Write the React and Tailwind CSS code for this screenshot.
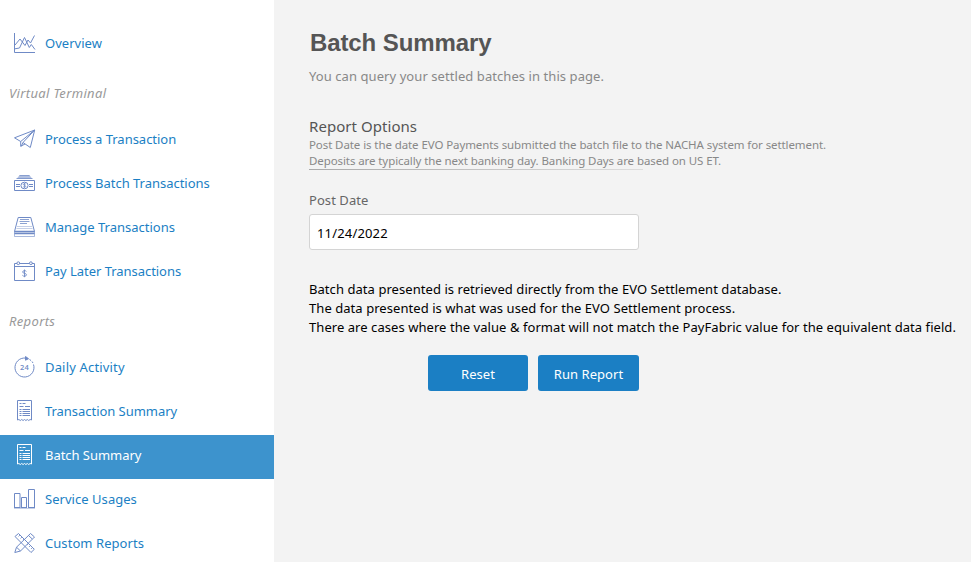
const icons = {
  overview: (
    <>
      <path d="M.5 1v19.5H21" />
      <path d="M1 16.8l4.5-.8L10.5 5.5l4.8 10 2-3L21 17.5" />
      <path d="M1 13l5-6 5 6.5L14 8l2.5 3L20.5 3.5" />
    </>
  ),
  plane: (
    <>
      <path d="M20.7 2L.5 9.8l6.2 3.7z" />
      <path d="M20.7 2l-4.4 17.5-7.3-5z" />
      <path d="M6.7 13.5v4.8L11 16M9 14.5l-1.8 3.8" />
    </>
  ),
  cash: (
    <>
      <path d="M5.5 3.2h10L18.5 7h-16z" fill="currentColor" fillOpacity=".55" stroke="none" />
      <path d="M5.5 3.5h10M2.5 6.5h16" strokeOpacity=".7" />
      <path d="M.5 8.5h20v10H.5z" />
      <ellipse cx="10.5" cy="13.5" rx="3.6" ry="3.3" />
      <path d="M2 12.5h4M2 14.5h4M15 12.5h4M15 14.5h4" />
      <path d="M11.8 12.2c-.8-.8-2.5-.6-2.5.3s2.5.8 2.5 1.8-1.9 1.2-2.6.3M10.5 11v5" strokeWidth=".8" />
    </>
  ),
  stack: (
    <>
      <path d="M4.2 1.5h12.6l3.7 14H.5z" />
      <path d="M6 3.5h9M5.5 5.5h10M6 7.5h7" strokeWidth=".8" />
      <path d="M3 10.5h15M2.5 12.5h16" strokeOpacity=".4" />
      <path d="M.5 15.5v2h20v-2M.5 17.5v3h20v-3" strokeOpacity=".6" />
      <path d="M.5 15.5h20M.5 17.5h20" strokeWidth="1.3" />
    </>
  ),
  calendar: (
    <>
      <path d="M.5 3.5H3M5.5 3.5h10M18 3.5h2.5v17H.5v-17M.5 6.5h20" />
      <circle cx="4.3" cy="3.2" r="1.4" />
      <circle cx="16.9" cy="3.2" r="1.4" />
      <path d="M12.4 11.4c-.8-1.2-3.8-1-3.8.6 0 1.7 3.9 1 3.9 2.8 0 1.7-3.2 1.9-4.1.5M10.5 9.5v7.7" strokeWidth=".9" />
    </>
  ),
  day: (
    <>
      <path d="M13.5 2.5A9.5 9.5 0 1 0 19.5 8.5" />
      <path d="M15.5 3.5l1.5 1M18 5.5l1 1.5" />
      <path d="M11.5.5l3 2.2-3 1.5z" fill="currentColor" />
      <text x="10.4" y="14" textAnchor="middle" fontSize="7.5" stroke="none" fill="currentColor" className="font-['Open_Sans',sans-serif] font-semibold">24</text>
    </>
  ),
  receipt: (
    <>
      <path d="M3.5 20V.5h14V20l-1.4-.5-1.4 1-1.4-1-1.4 1-1.4-1-1.4 1-1.4-1-1.4 1-1.4-1z" />
      <path d="M5.5 3.5h2M8.5 3.5h3M5.5 6.5h4M11 6.5h5" />
      <path d="M5.5 9.5h2M8.5 9.5h7.5M5.5 11.5h2M8.5 11.5h7.5M5.5 13.5h2M8.5 13.5h7.5M5.5 15.5h2M8.5 15.5h7.5" strokeWidth="1.2" />
    </>
  ),
  bars: (
    <>
      <path d="M.5 19.5V5.5H6v14M7.5 19.5v-10h5v10M14.5 19.5v-18h6v18" />
      <path d="M0 19.5h6.5M7 19.5h6M14 19.5h7" />
      <path d="M0 20.5h21" strokeOpacity=".4" />
    </>
  ),
  tools: (
    <>
      <path d="M1 4.5L4.5 1.5 20.3 17.3 17 20.5z" />
      <path d="M6 3L4.5 4.5M8 5L6.5 6.5M10 7L9 8M14.5 11.5L13 13M16.5 13.5L15 15M18.5 15.5L17 17" strokeWidth=".8" />
      <path d="M16.5 1.5l4 3.5L6.5 19 .8 20.5l1.7-5.3zM14.5 3.5l3.8 3.5M2.5 15.2l4 3.8" />
    </>
  ),
};

function Icon({ name }) {
  return (
    <svg viewBox="0 0 22 22" fill="none" stroke="currentColor" strokeWidth="1" className="size-[22px] shrink-0">
      {icons[name]}
    </svg>
  );
}

const topItems = [{ label: "Overview", icon: "overview", tracking: "tracking-[0.02px]" }];
const terminalItems = [
  { label: "Process a Transaction", icon: "plane", tracking: "tracking-[-0.02px]" },
  { label: "Process Batch Transactions", icon: "cash", tracking: "tracking-[-0.02px]" },
  { label: "Manage Transactions", icon: "stack", tracking: "tracking-[-0.01px]" },
  { label: "Pay Later Transactions", icon: "calendar", tracking: "tracking-[-0.04px]" },
];
const reportItems = [
  { label: "Daily Activity", icon: "day", tracking: "tracking-[0.17px]" },
  { label: "Transaction Summary", icon: "receipt", tracking: "tracking-[-0.04px]" },
  { label: "Batch Summary", icon: "receipt", tracking: "tracking-[-0.04px]", active: true },
  { label: "Service Usages", icon: "bars", tracking: "tracking-[0.04px]" },
  { label: "Custom Reports", icon: "tools", tracking: "tracking-[0.06px]" },
];

function NavList({ items }) {
  return (
    <ul>
      {items.map(({ label, icon, tracking, active }) => (
        <li
          key={label}
          className={`flex h-11 items-center gap-[9px] pb-1 pl-3.5 ${active ? "bg-[#3d93cd] text-white" : "text-[#1b7fc4]"}`}
        >
          <span className={active ? "text-white" : "text-[#6f8ac6]"}>
            <Icon name={icon} />
          </span>
          <a className={`whitespace-nowrap text-[13px] leading-5 ${tracking}`}>{label}</a>
        </li>
      ))}
    </ul>
  );
}

function NavHeading({ children }) {
  return (
    <h2 className="flex h-[52px] items-center pl-[9px] text-[13px] leading-5 tracking-[0.34px] text-[#999] italic">{children}</h2>
  );
}

export default function App() {
  return (
    <div className="flex h-[562px] w-[971px] overflow-hidden bg-[#f3f3f3] font-['Noto_Sans',sans-serif]">
      <nav className="w-[274px] shrink-0 bg-white pt-[23px]">
        <NavList items={topItems} />
        <NavHeading>Virtual Terminal</NavHeading>
        <NavList items={terminalItems} />
        <NavHeading>Reports</NavHeading>
        <NavList items={reportItems} />
      </nav>
      <main className="flex flex-col whitespace-nowrap pl-[35px] pt-7">
        <h1 className="pl-px font-['Liberation_Sans',Arial,sans-serif] text-2xl leading-[30px] font-bold tracking-[-0.1px] text-[#555]">
          Batch Summary
        </h1>
        <p className="mt-2 text-[13px] leading-5 tracking-[0.07px] text-[#888]">
          You can query your settled batches in this page.
        </p>
        <h2 className="mt-[30px] mb-px text-[15px] leading-5 tracking-[0.05px] text-[#555]">Report Options</h2>
        <p className="text-[11.5px] leading-4 tracking-[-0.09px] text-[#888]">
          Post Date is the date EVO Payments submitted the batch file to the NACHA system for settlement.
          <br />
          Deposits are typically the next banking day. Banking Days are based on US ET.
        </p>
        <div className="h-px w-[334px] bg-gradient-to-r from-[#aaa] to-[#ddd]" />
        <label className="mt-5 text-[13px] leading-5 tracking-[0.06px] text-[#666]">Post Date</label>
        <div className="mt-1 flex h-9 w-[330px] items-center rounded-[3px] border border-[#d4d4d4] bg-white px-[7px] pt-0.5 text-[13px] leading-5 tracking-[0.16px] text-black">
          11/24/2022
        </div>
        <p className="mt-[30px] text-[13px] leading-[19px] tracking-[0.058px] text-black">
          Batch data presented is retrieved directly from the EVO Settlement database.
          <br />
          The data presented is what was used for the EVO Settlement process.
          <br />
          There are cases where the value &amp; format will not match the PayFabric value for the equivalent data field.
        </p>
        <div className="mt-[18px] flex w-[330px] justify-end gap-2.5 text-[13px] tracking-[0.05px] text-white">
          <button className="h-9 w-[100px] rounded-[3px] bg-[#1b7fc4] pt-[3px]">Reset</button>
          <button className="h-9 w-[101px] rounded-[3px] bg-[#1b7fc4] pt-[3px]">Run Report</button>
        </div>
      </main>
    </div>
  );
}
